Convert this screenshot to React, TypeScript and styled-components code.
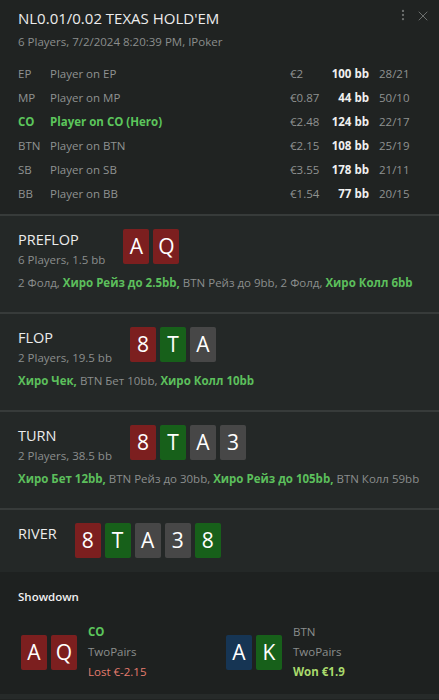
import { FC, Fragment } from "react";
import styled, { createGlobalStyle } from "styled-components";
import { X, EllipsisVertical } from "lucide-react";

const GlobalStyle = createGlobalStyle`
  html, body {
    margin: 0;
    padding: 0;
    background: #202322;
  }
  body {
    font-family: "Open Sans", "Noto Sans", sans-serif;
    color: #e6e6e6;
  }
`;

type Suit = "red" | "green" | "gray" | "blue";

const suitColors: Record<Suit, string> = {
  red: "#7c1f1f",
  green: "#17601a",
  gray: "#474747",
  blue: "#163554",
};

interface Player {
  pos: string;
  name: string;
  money: string;
  bb: string;
  stat: string;
  hero?: boolean;
}

const players: Player[] = [
  { pos: "EP", name: "Player on EP", money: "€2", bb: "100 bb", stat: "28/21" },
  { pos: "MP", name: "Player on MP", money: "€0.87", bb: "44 bb", stat: "50/10" },
  { pos: "CO", name: "Player on CO (Hero)", money: "€2.48", bb: "124 bb", stat: "22/17", hero: true },
  { pos: "BTN", name: "Player on BTN", money: "€2.15", bb: "108 bb", stat: "25/19" },
  { pos: "SB", name: "Player on SB", money: "€3.55", bb: "178 bb", stat: "21/11" },
  { pos: "BB", name: "Player on BB", money: "€1.54", bb: "77 bb", stat: "20/15" },
];

type CardT = [string, Suit];
type Action = [string, boolean];

interface Street {
  name: string;
  info?: string;
  cards: CardT[];
  actions?: Action[];
}

const streets: Street[] = [
  {
    name: "PREFLOP",
    info: "6 Players, 1.5 bb",
    cards: [["A", "red"], ["Q", "red"]],
    actions: [
      ["2 Фолд, ", false],
      ["Хиро Рейз до 2.5bb, ", true],
      ["BTN Рейз до 9bb, 2 Фолд, ", false],
      ["Хиро Колл 6bb", true],
    ],
  },
  {
    name: "FLOP",
    info: "2 Players, 19.5 bb",
    cards: [["8", "red"], ["T", "green"], ["A", "gray"]],
    actions: [
      ["Хиро Чек, ", true],
      ["BTN Бет 10bb, ", false],
      ["Хиро Колл 10bb", true],
    ],
  },
  {
    name: "TURN",
    info: "2 Players, 38.5 bb",
    cards: [["8", "red"], ["T", "green"], ["A", "gray"], ["3", "gray"]],
    actions: [
      ["Хиро Бет 12bb, ", true],
      ["BTN Рейз до 30bb, ", false],
      ["Хиро Рейз до 105bb, ", true],
      ["BTN Колл 59bb", false],
    ],
  },
  {
    name: "RIVER",
    cards: [["8", "red"], ["T", "green"], ["A", "gray"], ["3", "gray"], ["8", "green"]],
  },
];

const Styles = {
  Page: styled.div`
    width: 439px;
    background: #202322;
  `,
  Header: styled.div`
    padding: 6px 8px 9px 18px;
  `,
  TitleRow: styled.div`
    display: flex;
    justify-content: space-between;
    align-items: flex-start;
  `,
  Title: styled.div`
    font-size: 15px;
    line-height: 24px;
    color: #ececec;
  `,
  Icons: styled.div`
    display: flex;
    gap: 5px;
    color: #6c6f6e;
    padding-top: 2px;
  `,
  Sub: styled.div`
    font-size: 11.5px;
    line-height: 24px;
    color: #8b8e8d;
    margin-bottom: 7px;
  `,
  Grid: styled.div`
    display: grid;
    grid-template-columns: 32px 240px 40px 39px auto;
    grid-auto-rows: 24px;
    align-items: center;
    font-size: 11.5px;
  `,
  Cell: styled.div<{ $hero?: boolean; $right?: boolean; $bold?: boolean; $pad?: boolean }>`
    color: ${({ $hero, $bold }) => ($hero ? "#5cc65c" : $bold ? "#f0f0f0" : "#8f9291")};
    font-weight: ${({ $hero, $bold }) => ($hero || $bold ? 700 : 400)};
    text-align: ${({ $right }) => ($right ? "right" : "left")};
    padding-left: ${({ $pad }) => ($pad ? "10px" : "0")};
    white-space: nowrap;
  `,
  Section: styled.div<{ $last?: boolean }>`
    background: #242827;
    border-top: 2px solid #373b3a;
    padding: 13px 18px ${({ $last }) => ($last ? "14px" : "20px")};
  `,
  StreetRow: styled.div`
    display: flex;
    align-items: flex-start;
    gap: 18px;
  `,
  StreetInfo: styled.div`
    display: flex;
    flex-direction: column;
  `,
  StreetName: styled.div`
    font-size: 14.5px;
    line-height: 22px;
    color: #ececec;
  `,
  StreetSub: styled.div`
    font-size: 11.5px;
    line-height: 18px;
    color: #8b8e8d;
  `,
  Cards: styled.div`
    display: flex;
    gap: 4px;
  `,
  Card: styled.div<{ $suit: Suit }>`
    width: 26px;
    height: 35px;
    border-radius: 2px;
    background: ${({ $suit }) => suitColors[$suit]};
    color: #ffffff;
    font-size: 21px;
    line-height: 35px;
    text-align: center;
  `,
  Actions: styled.div`
    margin-top: 5px;
    font-size: 11.5px;
    line-height: 18px;
    color: #8b8e8d;
    white-space: nowrap;
  `,
  Act: styled.span<{ $hero: boolean }>`
    color: ${({ $hero }) => ($hero ? "#5cbf5c" : "#8b8e8d")};
    font-weight: ${({ $hero }) => ($hero ? 700 : 400)};
  `,
  Showdown: styled.div`
    background: #1e2120;
    padding: 16px 18px 12px;
    border-bottom: 5px solid #262a29;
  `,
  ShowTitle: styled.div`
    font-size: 11.5px;
    font-weight: 600;
    line-height: 17px;
    color: #f0f0f0;
    margin-bottom: 17px;
  `,
  Hands: styled.div`
    display: grid;
    grid-template-columns: 205px 1fr;
    padding-left: 3px;
  `,
  Hand: styled.div`
    display: flex;
    align-items: center;
    gap: 11px;
  `,
  HandText: styled.div`
    display: flex;
    flex-direction: column;
    font-size: 11.5px;
    line-height: 20px;
  `,
  HandLine: styled.div<{ $color: string; $bold?: boolean }>`
    color: ${({ $color }) => $color};
    font-weight: ${({ $bold }) => ($bold ? 700 : 400)};
  `,
};

const Cards: FC<{ cards: CardT[] }> = ({ cards }) => (
  <Styles.Cards>
    {cards.map(([r, s], i) => (
      <Styles.Card key={i} $suit={s}>
        {r}
      </Styles.Card>
    ))}
  </Styles.Cards>
);

const App: FC = () => {
  return (
    <Styles.Page>
      <GlobalStyle />
      <Styles.Header>
        <Styles.TitleRow>
          <Styles.Title>NL0.01/0.02 TEXAS HOLD'EM</Styles.Title>
          <Styles.Icons>
            <EllipsisVertical size={14} strokeWidth={2} />
            <X size={16} strokeWidth={1.5} />
          </Styles.Icons>
        </Styles.TitleRow>
        <Styles.Sub>6 Players, 7/2/2024 8:20:39 PM, IPoker</Styles.Sub>
        <Styles.Grid>
          {players.map((p) => (
            <Fragment key={p.pos}>
              <Styles.Cell $hero={p.hero}>{p.pos}</Styles.Cell>
              <Styles.Cell $hero={p.hero}>{p.name}</Styles.Cell>
              <Styles.Cell>{p.money}</Styles.Cell>
              <Styles.Cell $right $bold>{p.bb}</Styles.Cell>
              <Styles.Cell $pad>{p.stat}</Styles.Cell>
            </Fragment>
          ))}
        </Styles.Grid>
      </Styles.Header>

      {streets.map((s) => (
        <Styles.Section key={s.name} $last={!s.actions}>
          <Styles.StreetRow>
            <Styles.StreetInfo>
              <Styles.StreetName>{s.name}</Styles.StreetName>
              {s.info && <Styles.StreetSub>{s.info}</Styles.StreetSub>}
            </Styles.StreetInfo>
            <Cards cards={s.cards} />
          </Styles.StreetRow>
          {s.actions && (
            <Styles.Actions>
              {s.actions.map(([t, h], i) => (
                <Styles.Act key={i} $hero={h}>
                  {t}
                </Styles.Act>
              ))}
            </Styles.Actions>
          )}
        </Styles.Section>
      ))}

      <Styles.Showdown>
        <Styles.ShowTitle>Showdown</Styles.ShowTitle>
        <Styles.Hands>
          <Styles.Hand>
            <Cards cards={[["A", "red"], ["Q", "red"]]} />
            <Styles.HandText>
              <Styles.HandLine $color="#5cc65c" $bold>CO</Styles.HandLine>
              <Styles.HandLine $color="#8b8e8d">TwoPairs</Styles.HandLine>
              <Styles.HandLine $color="#e57c6e">Lost €-2.15</Styles.HandLine>
            </Styles.HandText>
          </Styles.Hand>
          <Styles.Hand>
            <Cards cards={[["A", "blue"], ["K", "green"]]} />
            <Styles.HandText>
              <Styles.HandLine $color="#8b8e8d">BTN</Styles.HandLine>
              <Styles.HandLine $color="#8b8e8d">TwoPairs</Styles.HandLine>
              <Styles.HandLine $color="#a9da6c" $bold>Won €1.9</Styles.HandLine>
            </Styles.HandText>
          </Styles.Hand>
        </Styles.Hands>
      </Styles.Showdown>
    </Styles.Page>
  );
};

export default App;
